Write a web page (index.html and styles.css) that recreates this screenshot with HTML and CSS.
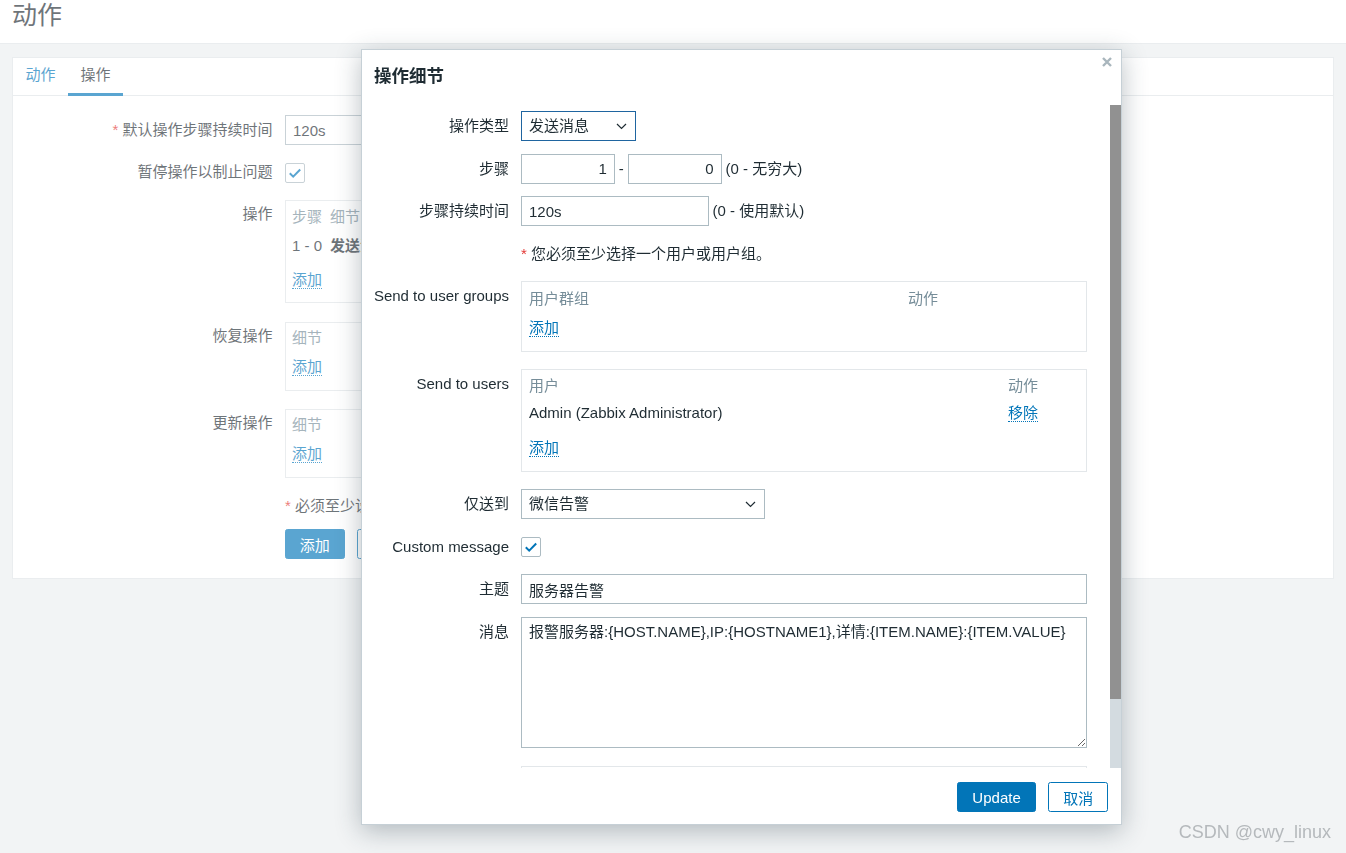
FILE: index.html
```html
<!DOCTYPE html>
<html lang="zh-CN">
<head>
<meta charset="utf-8">
<title>动作</title>
<link rel="stylesheet" href="styles.css">
</head>
<body>
<header class="page-header"><h1 class="page-title">动作</h1></header>
<main class="page-main">
  <section class="card">
    <nav class="tabs">
      <a class="tab">动作</a>
      <a class="tab tab-active">操作</a>
    </nav>
    <div class="pform">
      <div class="prow">
        <div class="plabel"><span class="req">*</span>&nbsp;默认操作步骤持续时间</div>
        <div class="pfield"><input class="pinput" value="120s"></div>
      </div>
      <div class="prow">
        <div class="plabel">暂停操作以制止问题</div>
        <div class="pfield pfield-center">
          <span class="checkbox"><svg width="18" height="18" viewBox="0 0 18 18"><path d="M3.8 9.3l3.4 3.4 7-7.2" fill="none" stroke="#0275b8" stroke-width="2"/></svg></span>
        </div>
      </div>
      <div class="prow prow-box1">
        <div class="plabel plabel-box">操作</div>
        <div class="pfield">
          <div class="pbox">
            <div class="pb-row pb-head"><span class="pc-step">步骤</span><span class="pc-detail">细节</span><span class="pc-more">开始于</span><span>持续时间</span><span class="pc-act">动作</span></div>
            <div class="pb-row pb-data"><span class="pc-step">1 - 0</span><b class="pc-detail">发送消息给用户: Admin (Zabbix Administrator) 通过 微信告警</b></div>
            <div class="pb-line pb-add"><a class="plink">添加</a></div>
          </div>
        </div>
      </div>
      <div class="prow prow-box2">
        <div class="plabel plabel-box">恢复操作</div>
        <div class="pfield">
          <div class="pbox">
            <div class="pb-row pb-head"><span class="pc-step">细节</span><span class="pc-act">动作</span></div>
            <div class="pb-line pb-add-short"><a class="plink">添加</a></div>
          </div>
        </div>
      </div>
      <div class="prow">
        <div class="plabel plabel-box">更新操作</div>
        <div class="pfield">
          <div class="pbox">
            <div class="pb-row pb-head"><span class="pc-step">细节</span><span class="pc-act">动作</span></div>
            <div class="pb-line pb-add-short"><a class="plink">添加</a></div>
          </div>
        </div>
      </div>
      <div class="prow prow-note">
        <div class="plabel"></div>
        <div class="pfield pfield-center"><span class="req">*</span>&nbsp;必须至少设置一个操作、恢复操作或更新操作。</div>
      </div>
      <div class="prow prow-last">
        <div class="plabel"></div>
        <div class="pfield pbtns">
          <button class="pbtn">添加</button>
          <button class="pbtn pbtn-alt">取消</button>
        </div>
      </div>
    </div>
  </section>
</main>

<div class="overlay"></div>

<div class="dialog">
  <div class="dlg-head">
    <h2 class="dlg-title">操作细节</h2>
    <svg class="dlg-close" width="10" height="10" viewBox="0 0 10 10"><path d="M1 1l8 8M9 1l-8 8" stroke="#a9b6bd" stroke-width="2.4"/></svg>
  </div>
  <div class="dlg-body">
    <div class="dlg-scroll">
      <div class="drow">
        <div class="dlabel">操作类型</div>
        <div class="dfield">
          <div class="select select-focus"><span>发送消息</span><svg width="11" height="7" viewBox="0 0 11 7"><path d="M1 1l4.5 4.5L10 1" fill="none" stroke="#1f2c33" stroke-width="1.2"/></svg></div>
        </div>
      </div>
      <div class="drow">
        <div class="dlabel">步骤</div>
        <div class="dfield">
          <input class="dinput step" value="1"><span class="dash">-</span><input class="dinput step" value="0"><span class="hint">(0 - 无穷大)</span>
        </div>
      </div>
      <div class="drow">
        <div class="dlabel">步骤持续时间</div>
        <div class="dfield">
          <input class="dinput dur" value="120s"><span class="hint">(0 - 使用默认)</span>
        </div>
      </div>
      <div class="drow">
        <div class="dlabel"></div>
        <div class="dfield"><span class="req-d">*</span>&nbsp;您必须至少选择一个用户或用户组。</div>
      </div>
      <div class="drow drow-box">
        <div class="dlabel">Send to user groups</div>
        <div class="dfield-top">
          <div class="dbox">
            <div class="db-row db-head"><span class="dc-groups">用户群组</span><span>动作</span></div>
            <div class="db-line db-add-short"><a class="dlink">添加</a></div>
          </div>
        </div>
      </div>
      <div class="drow drow-box">
        <div class="dlabel">Send to users</div>
        <div class="dfield-top">
          <div class="dbox">
            <div class="db-row db-head"><span class="dc-users">用户</span><span>动作</span></div>
            <div class="db-row db-data"><span class="dc-users">Admin (Zabbix Administrator)</span><span><a class="dlink">移除</a></span></div>
            <div class="db-line db-add"><a class="dlink">添加</a></div>
          </div>
        </div>
      </div>
      <div class="drow">
        <div class="dlabel">仅送到</div>
        <div class="dfield">
          <div class="select select-wide"><span>微信告警</span><svg width="11" height="7" viewBox="0 0 11 7"><path d="M1 1l4.5 4.5L10 1" fill="none" stroke="#1f2c33" stroke-width="1.2"/></svg></div>
        </div>
      </div>
      <div class="drow">
        <div class="dlabel">Custom message</div>
        <div class="dfield">
          <span class="checkbox"><svg width="18" height="18" viewBox="0 0 18 18"><path d="M3.8 9.3l3.4 3.4 7-7.2" fill="none" stroke="#0275b8" stroke-width="2"/></svg></span>
        </div>
      </div>
      <div class="drow">
        <div class="dlabel">主题</div>
        <div class="dfield"><input class="dinput full" value="服务器告警"></div>
      </div>
      <div class="drow drow-msg">
        <div class="dlabel">消息</div>
        <div class="dfield-top"><textarea class="dtext">报警服务器:{HOST.NAME},IP:{HOSTNAME1},详情:{ITEM.NAME}:{ITEM.VALUE}</textarea></div>
      </div>
      <div class="drow">
        <div class="dlabel"></div>
        <div class="dfield-top"><div class="dbox dbox-next"></div></div>
      </div>
    </div>
    <div class="scrollbar"><div class="thumb"></div></div>
  </div>
  <div class="dlg-foot">
    <button class="btn btn-update">Update</button>
    <button class="btn btn-alt">取消</button>
  </div>
</div>

<div class="watermark">CSDN @cwy_linux</div>
</body>
</html>
```
FILE: styles.css
```css
* { box-sizing: border-box; }
html, body { margin: 0; padding: 0; }
body {
  background: #ebeef0;
  font-family: "Liberation Sans", "Noto Sans CJK SC", sans-serif;
  font-size: 15px;
  line-height: 17.5px;
  color: #1f2c33;
  height: 853px;
  overflow: hidden;
}
a { text-decoration: none; }
button { font-family: inherit; font-size: 15px; cursor: pointer; }
input, textarea { font-family: inherit; font-size: 15px; color: #1f2c33; }

/* ---------- page ---------- */
.page-header {
  background: #fff;
  height: 44px;
  border-bottom: 1px solid #dfe4e7;
  padding: 0 12px;
}
.page-title {
  margin: 0;
  font-size: 25px;
  font-weight: normal;
  line-height: 30px;
}
.page-main { padding: 13px 12px 0; }
.card { background: #fff; border: 1px solid #dfe4e7; }
.tabs { display: flex; height: 38px; border-bottom: 1px solid #dfe4e7; }
.tab {
  height: 38px;
  margin-bottom: -1px;
  padding: 8px 12.5px 0;
  color: #0275b8;
}
.tab-active { color: #1f2c33; border-bottom: 3px solid #0275b8; }

.pform { padding: 19px 0 18.75px; }
.prow { display: flex; gap: 12.5px; margin-bottom: 12.5px; }
.prow-box1 { margin-bottom: 18.5px; }
.prow-box2 { margin-bottom: 17.5px; }
.prow-note { margin-bottom: 8.75px; }
.prow-last { margin-bottom: 0; }
.plabel {
  flex: none;
  width: 259.5px;
  display: flex;
  justify-content: flex-end;
  white-space: nowrap;
  padding-top: 5.5px;
}
.plabel-box { padding-top: 5px; }
.pfield { flex: 1; min-width: 0; }
.pfield-center { display: flex; align-items: center; height: 30px; white-space: nowrap; }
.req { color: #e33734; }
.pinput {
  width: 187.5px;
  height: 30px;
  border: 1px solid #acbbc2;
  padding: 0 7px;
  outline: none;
}
.checkbox {
  display: inline-flex;
  width: 20px;
  height: 20px;
  border: 1px solid #acbbc2;
  border-radius: 2px;
  background: #fff;
}
.pbox {
  width: 700px;
  border: 1px solid #dfe4e7;
  padding: 0 6px 14.25px;
  overflow: hidden;
  white-space: nowrap;
}
.pb-row { display: flex; height: 17.5px; }
.pb-line { height: 17.5px; }
.pb-head { margin-top: 6.5px; color: #768d99; }
.pb-data { margin-top: 11.5px; }
.pb-add { margin-top: 16.5px; }
.pb-add-short { margin-top: 11.5px; }
.pc-step { width: 38px; flex: none; }
.pc-detail { width: 420px; flex: none; }
.pc-more { width: 90px; flex: none; }
.pc-act { margin-left: auto; }
.plink { color: #0275b8; border-bottom: 1px dotted #0275b8; }
.pbtns { display: flex; gap: 12.5px; }
.pbtn {
  height: 30px;
  padding: 0 13.75px;
  border: 1px solid #0275b8;
  border-radius: 2.5px;
  background: #0275b8;
  color: #fff;
}
.pbtn-alt { background: #fff; color: #0275b8; }

.overlay {
  position: fixed;
  inset: 0;
  background: rgba(255, 255, 255, 0.35);
}

/* ---------- dialog ---------- */
.dialog {
  position: absolute;
  left: 361px;
  top: 49px;
  width: 761px;
  background: #fff;
  border: 1px solid #c6d0d6;
  box-shadow: 0 6px 24px rgba(40, 60, 70, 0.32);
}
.dlg-head {
  display: flex;
  justify-content: space-between;
  align-items: flex-start;
  height: 55px;
  padding: 0 9px 0 12px;
}
.dlg-title {
  margin: 16px 0 0;
  font-size: 17.5px;
  font-weight: bold;
  line-height: 20px;
}
.dlg-close { margin-top: 7px; }
.dlg-body { display: flex; height: 663px; }
.dlg-scroll {
  width: 748px;
  flex: none;
  overflow: hidden;
  padding: 6px 23px 0 12px;
}
.scrollbar { width: 11px; flex: none; background: #d3dbe0; }
.thumb { height: 594px; background: #919191; }
.dlg-foot {
  display: flex;
  justify-content: flex-end;
  gap: 12px;
  padding: 14px 13px 12px;
}
.btn {
  height: 30px;
  padding: 0 13.75px;
  border: 1px solid #0275b8;
  border-radius: 2.5px;
  background: #0275b8;
  color: #fff;
}
.btn-update { padding: 0 14.75px; }
.btn-alt { background: #fff; color: #0275b8; }

.drow { display: flex; gap: 12px; margin-bottom: 12.5px; }
.drow-box { margin-bottom: 17px; }
.drow-msg { margin-bottom: 18.5px; }
.dlabel {
  flex: none;
  width: 135px;
  display: flex;
  justify-content: flex-end;
  white-space: nowrap;
  padding-top: 6.25px;
}
.dfield {
  flex: 1;
  min-width: 0;
  height: 30px;
  display: flex;
  align-items: center;
  white-space: nowrap;
}
.dfield-top { flex: 1; min-width: 0; }
.req-d { color: #e33734; }
.select {
  height: 30px;
  display: flex;
  align-items: center;
  justify-content: space-between;
  padding: 0 8px 0 7px;
  border: 1px solid #acbbc2;
  background: #fff;
}
.select-focus { width: 114.5px; border-color: #1f65a0; }
.select-wide { width: 244px; }
.dinput {
  height: 30px;
  border: 1px solid #acbbc2;
  padding: 0 7px;
  outline: none;
  background: #fff;
}
.step { width: 93.75px; text-align: right; }
.dash { margin: 0 4px; }
.dur { width: 187.5px; }
.full { width: 566px; }
.hint { margin-left: 4px; }
.dbox {
  width: 566px;
  border: 1px solid #e3e7ea;
  padding: 0 7px 14.5px;
  white-space: nowrap;
}
.dbox-next { height: 70px; }
.db-row { display: flex; height: 17.5px; }
.db-line { height: 17.5px; }
.db-head { margin-top: 7.5px; color: #768d99; }
.db-data { margin-top: 9.5px; }
.db-add { margin-top: 17.5px; }
.db-add-short { margin-top: 11.5px; }
.dc-groups { width: 379px; flex: none; }
.dc-users { width: 479px; flex: none; }
.dlink { color: #0275b8; border-bottom: 1px dotted #0275b8; }
.dtext {
  display: block;
  width: 566px;
  height: 131px;
  border: 1px solid #acbbc2;
  padding: 5px 7px;
  line-height: 17.5px;
  resize: both;
  outline: none;
  margin: 0;
}

.watermark {
  position: absolute;
  right: 15px;
  bottom: 10px;
  font-size: 18px;
  line-height: 22px;
  color: #b5b9bc;
}
```
